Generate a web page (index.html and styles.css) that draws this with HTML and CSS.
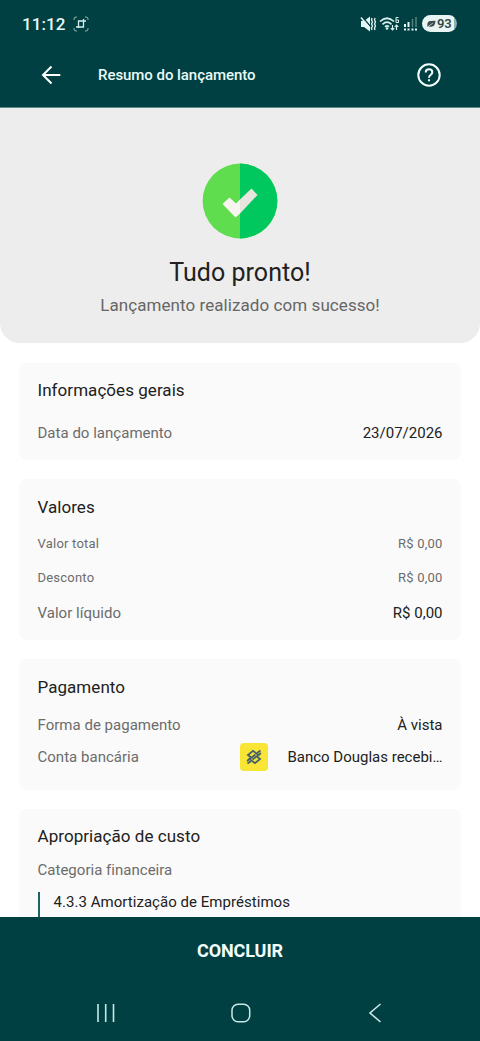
FILE: index.html
```html
<!DOCTYPE html>
<html lang="pt-BR">
<head>
<meta charset="utf-8">
<title>Resumo do lançamento</title>
<link rel="stylesheet" href="styles.css">
</head>
<body>
<div class="screen">
  <header class="top">
    <div class="status">
      <span class="clock">11:12</span>
      <svg class="capture" width="16" height="16" viewBox="0 0 16 16" fill="none">
        <path d="M1 4V3Q1 1 3 1H4M12 1H13Q15 1 15 3V4M15 12V13Q15 15 13 15H12M4 15H3Q1 15 1 13V12" stroke="#8fb5b2"/>
        <path d="M5.500 5V11H10.500V5ZM10.500 5V3M10.500 5H13M5.500 11H3M5.500 10.500V12" stroke="#d5efec" stroke-width="1.3"/>
      </svg>
      <div class="indicators">
        <svg width="17" height="16" viewBox="0 0 17 16">
          <path d="M1 5H4L10 .5V15.500L4 11H1Z" fill="#e6f7f5"/>
          <path d="M2 .5L11 11" stroke="#004042" stroke-width="1.200"/>
          <path d="M1 1.500L10 12.500" stroke="#e6f7f5" stroke-width="1.500"/>
          <path d="M12 2L11.500 4L12.500 6L11.500 8L12.500 10L11.500 12L12 14M15 2L14.500 4L15.500 6L14.500 8L15.500 10L14.500 12L15 14" fill="none" stroke="#e6f7f5" stroke-width="1.3"/>
        </svg>
        <svg width="22" height="16" viewBox="0 0 22 16">
          <path d="M1 5.500Q8 -1 15 5.500M3.500 8.300Q8 4 12.500 8.300M6 10.800Q8 9 10 10.800" fill="none" stroke="#d9f0ee" stroke-width="1.700"/>
          <circle cx="8" cy="12.500" r="1.300" fill="#d9f0ee"/>
          <path d="M13.500 9V14M11.700 12.200L13.500 14L15.300 12.200M17.500 14V9M15.700 10.800L17.500 9L19.300 10.800" fill="none" stroke="#d9f0ee" stroke-width="1.200"/>
          <path d="M19.500 1.500H17V6.500H19.500V4H17" fill="none" stroke="#d9f0ee"/>
        </svg>
        <svg width="16" height="16" viewBox="0 0 16 16">
          <path d="M2 8V11M5.500 6V11" stroke="#e6f7f5" stroke-width="2"/>
          <path d="M9.500 3V11M13 1V11" stroke="#56817f" stroke-width="1.500"/>
          <path d="M1 13.500H3M4.500 13.500H6.500M8.500 13.500H10.500M12 13.500H14" stroke="#e6f7f5" stroke-width="2"/>
        </svg>
        <div class="battery">
          <svg width="9" height="8" viewBox="0 0 10 8"><path d="M.5 7Q-.5 1 4 .7L9.500 .5Q9 7 5 7Q3 7.300 2 6.500Z" fill="#3d4b4b"/><path d="M1 7L6.500 3" stroke="#e6f2f1" stroke-width=".8"/></svg>
          <span>93</span>
        </div>
      </div>
    </div>
    <div class="appbar">
      <svg class="back" width="20" height="20" viewBox="0 0 20 20" fill="none" stroke="#fff" stroke-width="2"><path d="M19.300 10H2M10.500 1.500L2 10L10.500 18.500"/></svg>
      <h1>Resumo do lançamento</h1>
      <svg class="help" width="24" height="24" viewBox="0 0 24 24" fill="none" stroke="#f2fffd" stroke-width="2"><circle cx="12" cy="12" r="10.700"/><path d="M8.700 9.500Q8.700 6.200 12 6.200Q15.300 6.200 15.300 9.200Q15.300 10.500 13.800 11.700Q12 13 12 14.700"/><path d="M12 16.200V18.300"/></svg>
    </div>
  </header>
  <main>
    <section class="hero">
      <svg width="76" height="76" viewBox="0 0 76 76">
        <circle cx="38" cy="38" r="37.400" fill="#5fdd4e"/>
        <path d="M38 .6A37.400 37.400 0 0 1 38 75.400Z" fill="#00c75e"/>
        <path d="M20.500 41L27.500 34.500L34 40.500L38 36.500V50.500L33.500 54.500Z" fill="#f8f5f1"/>
        <path d="M38 36.500L49.500 25.500L55.500 32L38 50.500Z" fill="#e8e4de"/>
      </svg>
      <h2>Tudo pronto!</h2>
      <p>Lançamento realizado com sucesso!</p>
    </section>
    <div class="cards">
      <section class="card general">
        <h3>Informações gerais</h3>
        <div class="row"><span class="label">Data do lançamento</span><span class="value">23/07/2026</span></div>
      </section>
      <section class="card amounts">
        <h3>Valores</h3>
        <div class="row small"><span class="label">Valor total</span><span class="value">R$ 0,00</span></div>
        <div class="row small"><span class="label">Desconto</span><span class="value">R$ 0,00</span></div>
        <div class="row"><span class="label">Valor líquido</span><span class="value">R$ 0,00</span></div>
      </section>
      <section class="card payment">
        <h3>Pagamento</h3>
        <div class="row"><span class="label">Forma de pagamento</span><span class="value">À vista</span></div>
        <div class="row"><span class="label">Conta bancária</span>
          <span class="account">
            <svg width="28" height="28" viewBox="0 0 28 28"><rect width="28" height="28" rx="4" fill="#f8e535"/><g fill="none" stroke="#46606b" stroke-width="1.800"><path d="M11 14.500L8 12L13 7.800L18.500 12L12.500 16.500"/><path d="M17 13.500L20 16L15 20.200L9.500 16L15.500 11.500"/><path d="M17 10L20.500 7.500M18.500 12L21 10M7.500 20.500L11 18M7 18L9.500 16"/></g></svg>
            <span class="value">Banco Douglas recebi…</span>
          </span>
        </div>
      </section>
      <section class="card cost">
        <h3>Apropriação de custo</h3>
        <div class="label">Categoria financeira</div>
        <div class="category">4.3.3 Amortização de Empréstimos</div>
      </section>
    </div>
  </main>
  <footer>
    <button class="finish">CONCLUIR</button>
    <nav>
      <svg width="20" height="20" viewBox="0 0 20 20" stroke="#c9e8e5" stroke-width="1.600"><path d="M2 1V19M9.700 1V19M17.500 1V19"/></svg>
      <svg width="20" height="20" viewBox="0 0 20 20" fill="none" stroke="#c9e8e5" stroke-width="1.500"><rect x="1" y="1.300" width="17.700" height="17.400" rx="6"/></svg>
      <svg width="20" height="20" viewBox="0 0 20 20" fill="none" stroke="#c9e8e5" stroke-width="1.600"><path d="M15.500 1L5 10L15.500 19"/></svg>
    </nav>
  </footer>
</div>
</body>
</html>
```

FILE: styles.css
```css
* { box-sizing: border-box; margin: 0; }
body { font-family: Roboto, sans-serif; background: #fff; color: #212121; }
svg { display: block; flex: none; }
.screen { width: 480px; height: 1041px; display: flex; flex-direction: column; overflow: hidden; }
.top { height: 108px; flex: none; background: #004042; border-bottom: 1px solid #5e8a89; color: #e9fbf9; }
.status { height: 46px; display: flex; align-items: center; padding: 1px 23px 0 22px; }
.clock { font-size: 17px; font-weight: 500; letter-spacing: .05px; width: 50px; }
.capture { margin-left: 1px; }
.indicators { margin-left: auto; display: flex; align-items: center; gap: 2px; }
.indicators > svg { margin-left: -1px; margin-right: 1px; }
.battery { width: 35px; height: 17px; border-radius: 9px; background: linear-gradient(90deg, #e8f5f4 90%, #8fb0af 90%); color: #344747; display: flex; align-items: center; gap: 1px; padding-left: 5px; font-size: 13px; font-weight: 600; letter-spacing: -.3px; }
.appbar { height: 58px; display: flex; align-items: center; padding: 0 39px 0 41px; }
.appbar h1 { margin-left: 37px; font-size: 15px; font-weight: 500; letter-spacing: -.05px; }
.help { margin-left: auto; }
main { flex: 1; min-height: 0; overflow: hidden; }
.hero { height: 235px; background: #ededed; border-radius: 0 0 20px 20px; padding-top: 55px; display: flex; flex-direction: column; align-items: center; }
.hero h2 { font-size: 25px; line-height: 30px; font-weight: 400; margin-top: 19px; letter-spacing: .05px; }
.hero p { font-size: 17px; line-height: 20px; color: #666; margin-top: 7px; letter-spacing: .07px; }
.cards { padding: 20px 19px; display: flex; flex-direction: column; gap: 19px; }
.card { background: #fafafa; border-radius: 8px; padding: 17px 18.500px 0; flex: none; }
.card h3 { font-size: 17px; line-height: 22px; font-weight: 400; letter-spacing: .05px; }
.row { display: flex; justify-content: space-between; align-items: center; height: 20px; font-size: 15px; }
.label { color: #6c6c6c; font-size: 15px; letter-spacing: .02px; white-space: nowrap; }
.value { white-space: nowrap; }
.small, .small .label { font-size: 13px; color: #6c6c6c; letter-spacing: .22px; }
.general { height: 97px; padding-top: 16px; }
.general .row { margin-top: 22px; }
.amounts { height: 161px; }
.amounts .row { margin-top: 16px; }
.amounts .small { margin-top: 15px; }
.amounts .small + .small { margin-top: 14px; }
.payment { height: 131px; }
.payment .row { margin-top: 17px; }
.payment .row + .row { margin-top: 12px; }
.account { display: flex; align-items: center; gap: 19px; }
.cost { height: 150px; padding-top: 16px; }
.cost .label { margin-top: 13px; line-height: 20px; }
.category { margin-top: 12px; border-left: 2px solid #1b6567; height: 60px; padding-left: 14px; font-size: 15px; line-height: 20px; letter-spacing: .04px; }
footer { height: 124px; flex: none; background: #004042; }
.finish { display: block; width: 100%; height: 67px; border: 0; background: none; color: #f2fffd; font: 700 18px Roboto, sans-serif; letter-spacing: -.1px; }
nav { display: flex; justify-content: space-between; padding: 19px 95px 0 96px; }
```
